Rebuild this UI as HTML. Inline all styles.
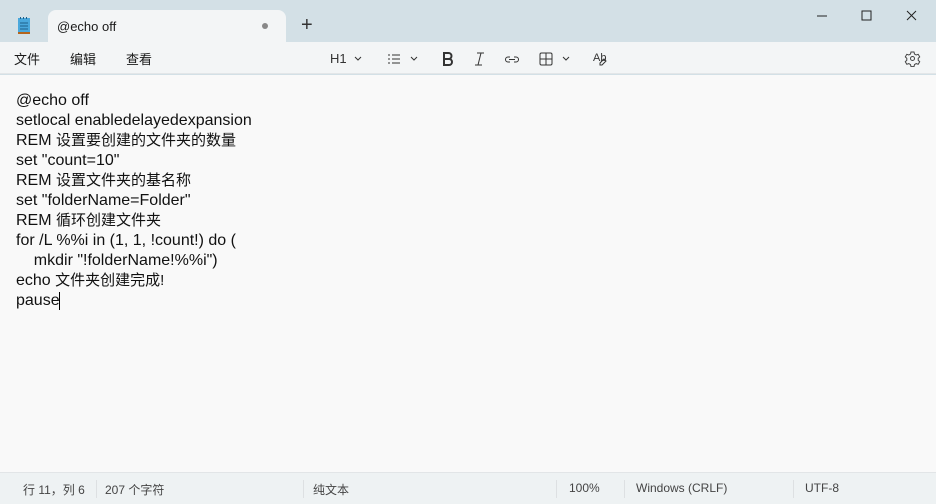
<!DOCTYPE html>
<html><head><meta charset="utf-8"><style>
*{margin:0;padding:0;box-sizing:border-box}
body{width:936px;height:504px;overflow:hidden;background:#d3e0e6;font-family:"Liberation Sans","Noto Sans CJK SC",sans-serif;position:relative;color:#1a1a1a}
.abs{position:absolute}
.tab{left:48px;top:10px;width:238px;height:34px;background:#f3f5f6;border-radius:8px 8px 0 0}
.toolbar{left:0;top:42px;width:936px;height:32px;background:#f3f5f6;border-bottom:1px solid #e3e6e8}
.editor{left:0;top:75px;width:936px;height:397px;background:#f9f9f9}
.status{left:0;top:472px;width:936px;height:32px;background:#eef2f3;border-top:1px solid #e2e5e7;font-size:12px;color:#444}
.status span{position:absolute;top:8px}
.sep{position:absolute;top:7px;width:1px;height:18px;background:#dde0e2}
.menu{font-size:13px;top:49px}
pre{font-family:"Liberation Sans","Noto Sans CJK SC",sans-serif;font-size:16px;letter-spacing:0;line-height:20px;position:absolute;left:16px;top:91px;color:#111}
pre i{font-style:normal;font-size:15px}
.ic{color:#333;font-size:13px}
</style></head><body>
<svg class="abs" style="left:17px;top:16px" width="14" height="19" viewBox="0 0 14 19"><rect x="1" y="2" width="12" height="16" fill="#4aa8dc"/><rect x="1" y="16" width="12" height="2" fill="#b5651d"/><g stroke="#1d5f8a" stroke-width="1"><line x1="3" y1="7" x2="11" y2="7"/><line x1="3" y1="10" x2="11" y2="10"/><line x1="3" y1="13" x2="11" y2="13"/></g><g fill="#1d5f8a"><rect x="3" y="1" width="1" height="2"/><rect x="6" y="1" width="1" height="2"/><rect x="9" y="1" width="1" height="2"/></g></svg>
<div class="abs tab"></div>
<div class="abs" style="left:57px;top:19px;font-size:13px">@echo off</div>
<div class="abs" style="left:262px;top:23px;width:6px;height:6px;border-radius:50%;background:#888"></div>
<div class="abs" style="left:301px;top:14px;font-size:20px;font-weight:300;color:#333">+</div>
<svg class="abs" style="left:810px;top:8px" width="116" height="16"><line x1="7" y1="8" x2="17" y2="8" stroke="#222"/><rect x="52" y="3" width="9" height="9" fill="none" stroke="#222"/><path d="M97 3l9 9M106 3l-9 9" stroke="#222"/></svg>
<div class="abs toolbar"></div>
<div class="abs menu" style="left:14px">文件</div>
<div class="abs menu" style="left:70px">编辑</div>
<div class="abs menu" style="left:126px">查看</div>
<div class="abs ic" style="left:330px;top:51px">H1</div>
<svg class="abs" style="left:320px;top:50px" width="290" height="18" fill="none" stroke="#333" stroke-width="1">
<path d="M35 7l3 3 3-3"/>
<g><line x1="68" y1="5" x2="70" y2="5"/><line x1="68" y1="9" x2="70" y2="9"/><line x1="68" y1="13" x2="70" y2="13"/><line x1="72" y1="5" x2="80" y2="5"/><line x1="72" y1="9" x2="80" y2="9"/><line x1="72" y1="13" x2="80" y2="13"/></g>
<path d="M91 7l3 3 3-3"/>
<path d="M124 3h4.5a3 3 0 0 1 0 6H124zM124 9h5a3 3 0 0 1 0 6h-5z" stroke-width="2"/>
<path d="M157 3h7M155 15h7M161 3l-3 12"/>
<path d="M190 7h-2a2.5 2.5 0 0 0 0 5h2M194 7h2a2.5 2.5 0 0 1 0 5h-2M189 9.5h6"/>
<rect x="220" y="3" width="12" height="12" rx="1.5"/><path d="M226 3v12M220 9h12"/>
<path d="M243 7l3 3 3-3"/>
<text x="273" y="11" font-size="11" fill="#333" stroke="none" font-family="Liberation Sans">Ab</text>
<path d="M280 13l4-4 2 2-4 4h-2z"/>
</svg>
<svg class="abs" style="left:904px;top:50px" width="17" height="17" fill="none" stroke="#444"><circle cx="8.5" cy="8.5" r="2"/><path d="M7 2h3l.5 2 1.7 1 2-.7 1.5 2.6-1.5 1.4v2l1.5 1.4-1.5 2.6-2-.7-1.7 1-.5 2H7l-.5-2-1.7-1-2 .7-1.5-2.6 1.5-1.4v-2L1.3 6.9 2.8 4.3l2 .7 1.7-1z"/></svg>
<div class="abs editor"></div>
<pre>@echo off
setlocal enabledelayedexpansion
REM <i>设置要创建的文件夹的数量</i>
set "count=10"
REM <i>设置文件夹的基名称</i>
set "folderName=Folder"
REM <i>循环创建文件夹</i>
for /L %%i in (1, 1, !count!) do (
    mkdir "!folderName!%%i")
echo <i>文件夹创建完成!</i>
pause</pre>
<div class="abs" style="left:59px;top:292px;width:1px;height:18px;background:#000"></div>
<div class="abs status">
<span style="left:23px">行 11，列 6</span><div class="sep" style="left:96px"></div>
<span style="left:105px">207 个字符</span><div class="sep" style="left:303px"></div>
<span style="left:313px">纯文本</span><div class="sep" style="left:556px"></div>
<span style="left:569px">100%</span><div class="sep" style="left:624px"></div>
<span style="left:636px">Windows (CRLF)</span><div class="sep" style="left:793px"></div>
<span style="left:805px">UTF-8</span>
</div>
</body></html>
